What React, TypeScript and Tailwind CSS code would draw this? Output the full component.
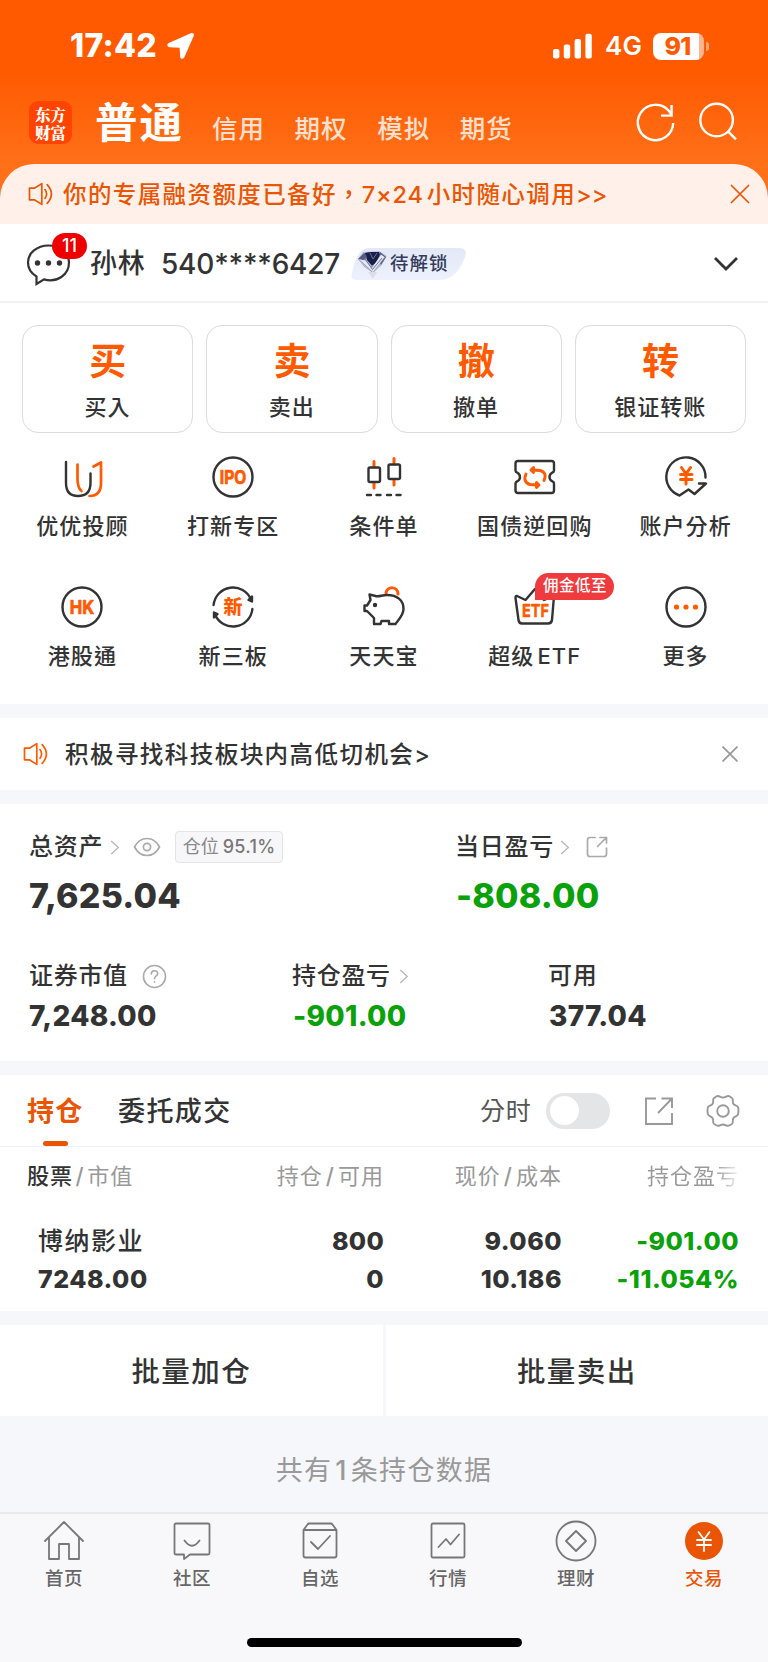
import type { ReactNode } from "react";

const INK = "#333333";
const ORANGE = "#ff5a00";

function StatusBar() {
  return (
    <div className="flex h-[92px] items-center text-white">
      <span className="ml-[70px] w-[97px] text-[32px] leading-none font-extrabold tracking-[0.300px]">17:42</span>
      <svg className="h-[28px] w-[28px]" viewBox="0 0 28 28" fill="#fff">
        <path d="M23.800 1.200C26 .3 27.600 1.800 26.700 4L17.400 25.300C16.400 27.400 13.600 27.200 13.200 24.900L12.600 15.800 2.800 15.200C-.1 14.800-.5 12.100 1.800 11Z" />
      </svg>
      <svg className="ml-[358px] h-[26px] w-[40px]" viewBox="0 0 40 26" fill="#fff">
        <rect x="0" y="16" width="6.4" height="9.6" rx="2" />
        <rect x="10.8" y="11.6" width="6.4" height="14" rx="2" />
        <rect x="21.6" y="6" width="6.4" height="19.6" rx="2" />
        <rect x="32.4" y="0.8" width="6.4" height="24.8" rx="2" />
      </svg>
      <span className="ml-[12px] w-[48px] text-[26px] leading-none font-semibold tracking-[0.300px]">4G</span>
      <div className="flex h-[27px] w-[51px] items-center justify-center rounded-[8px] bg-[linear-gradient(90deg,#fff_46px,#ffb490_46px)] pr-[2px] text-[25px] leading-none font-extrabold tracking-[-0.800px] text-[#ff5a00]">
        91
      </div>
      <div className="ml-[2px] h-[9px] w-[3px] rounded-r-full bg-[#ffa57a]" />
    </div>
  );
}

function Header() {
  return (
    <div className="flex h-[72px] text-white">
      <div className="mt-[9px] ml-[29px] flex h-[43px] w-[43px] items-center justify-center rounded-[9px] bg-[#ff4400] text-center font-['Noto_Serif_CJK_SC','Noto_Sans_CJK_SC',serif] text-[15.500px] leading-[18px] font-extrabold">
        东方
        <br />
        财富
      </div>
      <span className="mt-[6px] ml-[23px] w-[117px] font-['Noto_Sans_CJK_SC',sans-serif] text-[42.500px] leading-[44px] font-bold tracking-[2px] whitespace-nowrap" lang="zh-CN">
        普通
      </span>
      {["信用", "期权", "模拟", "期货"].map((t) => (
        <span key={t} className="mt-[19px] w-[82.600px] text-[25.500px] leading-[36px] tracking-[1px] text-[#ffe0cf]">
          {t}
        </span>
      ))}
      <svg className="mt-[8px] ml-[92px] h-[44px] w-[44px]" viewBox="0 0 44 44" fill="none" stroke="#fff" strokeWidth="2.400">
        <path d="M39.200 23A17.700 17.700 0 1 1 34.800 10.800L37.500 14.500M37.600 5V15.600H27" />
      </svg>
      <svg className="mt-[8px] ml-[18px] h-[44px] w-[44px]" viewBox="0 0 44 44" fill="none" stroke="#fff" strokeWidth="2.400">
        <circle cx="20.6" cy="20" r="16.3" />
        <path d="M32 31.4 40 39.4" />
      </svg>
    </div>
  );
}

function Speaker({ color, className }: { color: string; className: string }) {
  return (
    <svg className={className} viewBox="0 0 26 24" fill="none" stroke={color} strokeWidth="1.700" strokeLinejoin="round" strokeLinecap="round">
      <path d="M1.500 6.200H6.400L13.800 1.600V22.400L6.400 17.800H1.500ZM17 7.600Q20.200 12 17 16.400M19.200 2.600Q27.600 12 19.200 21.400" />
    </svg>
  );
}

function Chevron({ className }: { className: string }) {
  return (
    <svg className={className} viewBox="0 0 10 16" fill="none" stroke="#bbb" strokeWidth="1.600">
      <path d="M1 1 8.500 8 1 15" />
    </svg>
  );
}

function AccountRow() {
  return (
    <div className="flex h-[79px] items-center border-b-2 border-[#f1f1f3] pt-[2px] text-[#333]">
      <div className="relative ml-[26px] h-[44px] w-[46px]">
        <svg className="h-full w-full" viewBox="0 0 46 44" fill="none" stroke={INK} strokeWidth="2.200">
          <path d="M10.500 34.500V42L18 37.400C31 41 43 33 43 20.500 43 10 34 3.500 22.500 3.500 11 3.500 2 11 2 20.500 2 26 5.500 31.500 10.500 34.500Z" />
          <g fill={INK} stroke="none">
            <circle cx="11.500" cy="21" r="2.700" />
            <circle cx="22.500" cy="21" r="2.700" />
            <circle cx="33.500" cy="21" r="2.700" />
          </g>
        </svg>
        <span className="absolute top-[-9px] left-[26px] flex h-[26px] w-[35px] items-center justify-center rounded-full bg-[#ee0000] text-[18px] font-medium text-white">
          11
        </span>
      </div>
      <span className="ml-[18px] w-[71px] text-[27px] leading-none tracking-[0.800px]">孙林</span>
      <span className="w-[190px] text-[28px] leading-none font-medium tracking-[-0.200px]">540****6427</span>
      <div className="flex h-[32px] w-[116px] items-center">
        <svg className="h-[32px] w-[116px] shrink-0" viewBox="0 0 116 32">
          <defs>
            <linearGradient id="tag" x1="0" y1="0" x2="0" y2="1">
              <stop offset="0" stopColor="#e3e8f7" />
              <stop offset="1" stopColor="#eef1fd" />
            </linearGradient>
          </defs>
          <path d="M18 0H108Q117 0 114 9 106 32 88 32H6Q-1 32 1 25 6 0 18 0Z" fill="url(#tag)" />
          <path d="M7 11 12 4 28 3 36 8 30 18 22 25 13 19Z" fill="#b9bedb" />
          <path d="M14 5 20 4 28 4 31 10 22 19 16 12Z" fill="#17204a" />
          <path d="M7 11 13 5 17 8 12 13ZM29 4 35 9 30 17 27 12Z" fill="#555a7e" />
          <path d="M7 11 20 18 35 8 22 25Z" fill="#9197bd" />
          <path d="M14 5 28 4 26 12 22 17 17 11Z" fill="#17204a" />
          <path d="M8 11 14 12.500 21 20 30 6.500 33.500 9 22 24Z" fill="#e8e8ef" />
          <path d="M13 9.500 21.500 21.500 31 10M19 5 22 11 26 5" fill="none" stroke="#6f728c" strokeWidth="1" />
          <path d="M17 24H26L22 31Z" fill="#dcdde5" />
        </svg>
        <span className="ml-[-77px] text-[18.500px] leading-none font-medium tracking-[1px] whitespace-nowrap text-[#333c5c]">待解锁</span>
      </div>
      <svg className="ml-[246px] h-[16px] w-[26px]" viewBox="0 0 26 16" fill="none" stroke={INK} strokeWidth="2.800">
        <path d="M2 2 13 13 24 2" />
      </svg>
    </div>
  );
}

function QuickCards() {
  const cards = [
    ["买", "买入"],
    ["卖", "卖出"],
    ["撤", "撤单"],
    ["转", "银证转账"],
  ];
  return (
    <div className="grid grid-cols-4 gap-[13px] px-[22px] pt-[22px]">
      {cards.map(([big, label]) => (
        <div key={big} className="flex h-[108px] flex-col items-center rounded-[16px] border-[1.500px] border-[#dcdcdc]">
          <span className="mt-[16px] text-[37px] leading-[40px] font-bold text-[#ff5a00]">{big}</span>
          <span className="mt-[10.500px] text-[22px] leading-[28px] tracking-[1px] text-[#333]">{label}</span>
        </div>
      ))}
    </div>
  );
}

function Icon({ children }: { children: ReactNode }) {
  return (
    <svg className="h-[46px] w-[46px]" viewBox="0 0 46 46" fill="none" stroke={INK} strokeWidth="2.400" strokeLinecap="round" strokeLinejoin="round">
      {children}
    </svg>
  );
}

const icons = {
  uu: (
    <>
      <path d="M7 8V29Q7 42 19 42 31.500 42 31.500 29V19.500" />
      <path d="M18.500 10.500V24Q18.500 34 22.500 37M34.500 12.500 42 8.500V29Q42 42 30.500 42" stroke={ORANGE} strokeWidth="2.700" />
    </>
  ),
  ipo: (
    <>
      <circle cx="23" cy="23" r="19.500" />
      <text x="23" y="29.800" textAnchor="middle" fontSize="18.500" fontWeight="700" fill={ORANGE} stroke={ORANGE} strokeWidth=".7" textLength="26.500" lengthAdjust="spacingAndGlyphs">IPO</text>
    </>
  ),
  candle: (
    <>
      <path d="M13 7.500V13M13 28.500V34M33 4.500V10M33 25.500V31" stroke={ORANGE} strokeWidth="3" />
      <rect x="7.500" y="13.500" width="11.500" height="14.500" rx="1.500" />
      <rect x="27.500" y="10.500" width="11.500" height="14.500" rx="1.500" />
      <path d="M6 41H10M15.500 41H19.500M26 41H30M35.500 41H39.500" />
    </>
  ),
  bond: (
    <>
      <path d="M6 7H39.500Q42 7 42 9.500V16.500Q42 18 40.500 18.500 37.500 20 37.500 23T40.500 27.500Q42 28 42 29.500V36.500Q42 39 39.500 39H6Q3.500 39 3.500 36.500V29.500Q3.500 28 5 27.500 8 26 8 23T5 18.500Q3.500 18 3.500 16.500V9.500Q3.500 7 6 7Z" />
      <g stroke={ORANGE} strokeWidth="2.900">
        <path d="M14 20Q10.500 28 18 30.500L25 31M32 26.500Q35.500 18.500 28 16.500L21 16" />
        <path d="M24.500 28.500V33.500L27 31ZM21.500 13.500V18.500L19 16Z" />
      </g>
    </>
  ),
  analysis: (
    <>
      <path d="M42.500 23.500A19.600 19.600 0 1 0 16.500 41.500L25.500 35.500 31.500 40 43 29.500H36" />
      <path d="M18.500 13.500 23 20 27.500 13.500M17.500 20.500H29M17.500 25.500H29M23 20V30" stroke={ORANGE} strokeWidth="3" />
    </>
  ),
  hk: (
    <>
      <circle cx="23" cy="23" r="19.500" />
      <text x="23" y="29.800" textAnchor="middle" fontSize="18.500" fontWeight="700" fill={ORANGE} stroke={ORANGE} strokeWidth=".7" textLength="24.500" lengthAdjust="spacingAndGlyphs">HK</text>
    </>
  ),
  xin: (
    <>
      <path d="M3.600 21A19.500 19.500 0 0 1 41 15.500M42.400 25A19.500 19.500 0 0 1 5 30.500" />
      <path d="M42 12.500V17.500L38.500 16ZM4 33.500V28.500L7.500 30Z" fill={INK} />
      <text x="23" y="30" textAnchor="middle" fontSize="19" fontWeight="800" fill={ORANGE} stroke="none">新</text>
    </>
  ),
  pig: (
    <>
      <path d="M25 9C26 2 37 2 37 10" stroke={ORANGE} strokeWidth="3" />
      <path d="M14.500 12 8.500 10.500 9.500 16 6 21.500H3.500V27H6L13 34V40H19.500L20.500 37H28V40H34.500C38 35 42.500 31 42.500 25 42.500 16 36 11 26 11 21 11 18 13 14.500 12Z" />
      <circle cx="14" cy="21" r="2.200" fill={INK} stroke="none" />
    </>
  ),
  etf: (
    <>
      <path d="M5 12 13.500 16 23 5 32 16 42 12 40 36Q39.500 39.500 36 39.500H10Q7 39.500 6.500 36L3.500 14Q3.500 11.500 5 12Z" />
      <text x="23.500" y="33.200" textAnchor="middle" fontSize="18" fontWeight="700" fill={ORANGE} stroke={ORANGE} strokeWidth=".5" textLength="27" lengthAdjust="spacingAndGlyphs">ETF</text>
    </>
  ),
  more: (
    <>
      <circle cx="23" cy="23" r="19.500" />
      <g fill={ORANGE} stroke="none">
        <circle cx="13.500" cy="23" r="2.600" />
        <circle cx="23" cy="23" r="2.600" />
        <circle cx="32.500" cy="23" r="2.600" />
      </g>
    </>
  ),
};

const features: [keyof typeof icons, string][] = [
  ["uu", "优优投顾"],
  ["ipo", "打新专区"],
  ["candle", "条件单"],
  ["bond", "国债逆回购"],
  ["analysis", "账户分析"],
  ["hk", "港股通"],
  ["xin", "新三板"],
  ["pig", "天天宝"],
  ["etf", "超级 ETF"],
  ["more", "更多"],
];

function FeatureGrid() {
  return (
    <div className="grid h-[271px] grid-cols-5 content-start px-[7px] pt-[21px]">
      {features.map(([id, label]) => (
        <div key={id} className="relative flex h-[129.500px] flex-col items-center">
          <Icon>{icons[id]}</Icon>
          <span className="mt-[10px] text-[22px] leading-[32px] tracking-[1.100px] whitespace-nowrap text-[#333] [word-spacing:-4px]">{label}</span>
          {id === "etf" && (
            <span className="absolute top-[-11px] left-[76px] flex h-[27px] w-[79px] items-center justify-center rounded-[14px] rounded-bl-none bg-[#ef3b3e] text-[15.500px] font-medium tracking-[0.500px] whitespace-nowrap text-white">
              佣金低至
            </span>
          )}
        </div>
      ))}
    </div>
  );
}

function Assets() {
  return (
    <div className="h-[257px] pt-[27px] text-[#333]">
      <div className="flex h-[32px] items-center pl-[29px]">
        <span className="text-[24px] leading-none tracking-[0.700px] whitespace-nowrap">总资产</span>
        <Chevron className="ml-[7px] h-[15px] w-[10px]" />
        <svg className="ml-[13px] h-[22px] w-[28px]" viewBox="0 0 28 22" fill="none" stroke="#aaa" strokeWidth="1.700">
          <path d="M1.500 11Q6 2.500 14 2.500T26.500 11Q22 19.500 14 19.500T1.500 11Z" />
          <circle cx="14" cy="11" r="3.600" />
        </svg>
        <div className="ml-[14px] flex h-[32px] w-[108px] shrink-0 items-center justify-center rounded-[4px] border-[1.500px] border-[#e4e4e6] bg-[#f7f7f9] text-[18px] leading-none font-normal whitespace-nowrap text-[#888]">
          仓位<span className="ml-[4px] font-medium tracking-[0.300px] text-[#777]">95.1%</span>
        </div>
        <span className="ml-[172px] text-[24px] leading-none tracking-[0.700px] whitespace-nowrap">当日盈亏</span>
        <Chevron className="ml-[6px] h-[15px] w-[10px]" />
        <svg className="ml-[16px] h-[22px] w-[22px]" viewBox="0 0 22 22" fill="none" stroke="#aaa" strokeWidth="1.700" strokeLinecap="round">
          <path d="M9 1.500H4Q1.500 1.500 1.500 4V18Q1.500 20.500 4 20.500H18Q20.500 20.500 20.500 18V12M14 1.500H20.500V7M20 2 11.500 10.500" />
        </svg>
      </div>
      <div className="mt-[15px] flex h-[36px] items-center pl-[29px] text-[34px] leading-none font-extrabold tracking-[0.200px]">
        <span className="w-[427px]">7,625.04</span>
        <span className="text-[#0aa10a]">-808.00</span>
      </div>
      <div className="mt-[46px] flex h-[32px] items-center pl-[29px] text-[24px] leading-none tracking-[0.700px]">
        <div className="flex w-[263px] items-center">
          <span>证券市值</span>
          <svg className="ml-[14px] h-[25px] w-[25px]" viewBox="0 0 25 25" fill="none" stroke="#aaa" strokeWidth="1.600" strokeLinecap="round">
            <circle cx="12.500" cy="12.500" r="11" />
            <path d="M9.300 10Q9.300 6.700 12.500 6.700T15.700 9.700C15.700 12 12.500 12 12.500 14.800M12.500 17.900V18.100" />
          </svg>
        </div>
        <div className="flex w-[256px] items-center">
          <span>持仓盈亏</span>
          <Chevron className="ml-[8px] h-[15px] w-[10px]" />
        </div>
        <span>可用</span>
      </div>
      <div className="mt-[7px] flex h-[34px] items-center pl-[29px] text-[28px] leading-none font-extrabold tracking-[0.300px]">
        <span className="w-[264px]">7,248.00</span>
        <span className="w-[256px] text-[#0aa10a]">-901.00</span>
        <span>377.04</span>
      </div>
    </div>
  );
}

function Holdings() {
  return (
    <div className="h-[236px] text-[#333]">
      <div className="flex h-[72px] items-center border-b-[1.500px] border-[#f0f0f2]">
        <div className="flex h-full w-[91px] shrink-0 flex-col pl-[27px]">
          <span className="pt-[19px] text-[27px] leading-[36px] font-bold tracking-[1.300px] text-[#ea5504]">持仓</span>
          <span className="mt-auto ml-[16px] h-[5px] w-[25px] rounded-full bg-[#ea5504]" />
        </div>
        <span className="ml-[27px] w-[362px] pt-[2px] text-[27px] leading-none tracking-[1.400px]">委托成交</span>
        <span className="w-[66px] pt-[2px] text-[25px] leading-none font-normal tracking-[0.800px] text-[#555]">分时</span>
        <div className="flex h-[36px] w-[64px] items-center rounded-full bg-[#e4e5e7] px-[3.500px]">
          <div className="h-[29px] w-[29px] rounded-full bg-white" />
        </div>
        <svg className="ml-[34px] h-[30px] w-[30px]" viewBox="0 0 30 30" fill="none" stroke="#999" strokeWidth="1.900">
          <path d="M12 2.500H2V28H28V17M17.500 2.500H28V12M27.500 3 14 17" />
        </svg>
        <svg className="ml-[31px] h-[36px] w-[36px]" viewBox="0 0 36 36" fill="none" stroke="#999" strokeWidth="1.900" strokeLinejoin="round">
          <path d="M18 4.500C21 4.500 22 2 24.200 3.200L27 5C28.800 6.200 27 8.500 28.300 10.700 29.600 13 32.500 12.500 33.200 14.500L33.500 17.500 33.200 21C32.500 23.500 29.600 23 28.300 25.300 27 27.500 28.800 29.800 27 31L24.200 32.500C22 33.700 21 31.500 18 31.500S14 33.700 11.800 32.500L9 31C7.200 29.800 9 27.500 7.700 25.300 6.400 23 3.500 23.500 2.800 21L2.500 17.500 2.800 14.500C3.500 12.500 6.400 13 7.700 10.700 9 8.500 7.200 6.200 9 5L11.800 3.200C14 2 15 4.500 18 4.500Z" />
          <circle cx="18" cy="18" r="5.800" />
        </svg>
      </div>
      <div className="flex h-[57px] items-center pl-[27px] text-[22px] leading-none font-normal tracking-[1px] whitespace-nowrap text-[#999]">
        <span className="w-[200px]">
          <span className="font-medium text-[#333]">股票</span>
          <span className="mx-[2.500px] font-medium">/</span>市值
        </span>
        <span className="w-[157px] text-right">
          持仓<span className="mx-[3px] font-medium">/</span>可用
        </span>
        <span className="w-[178px] text-right">
          现价<span className="mx-[3px] font-medium">/</span>成本
        </span>
        <span className="ml-auto mr-[29px] bg-[linear-gradient(90deg,#999_74%,#9992_100%)] bg-clip-text py-1 text-transparent">持仓盈亏</span>
      </div>
      <div className="mt-[18px] grid grid-cols-[346px_178px_177px] pl-[38px] text-right text-[25px] leading-[38px] font-extrabold tracking-[0.500px]">
        <span className="text-left font-medium tracking-[1.500px]">
          博纳影业<span className="float-right font-extrabold tracking-[0.300px]">800</span>
        </span>
        <span>9.060</span>
        <span className="text-[#0aa10a]">-901.00</span>
        <span className="text-left">
          7248.00<span className="float-right">0</span>
        </span>
        <span>10.186</span>
        <span className="text-[#0aa10a]">-11.054%</span>
      </div>
    </div>
  );
}

function BatchActions() {
  return (
    <div className="flex h-[91px] gap-[3px] text-[28.500px] leading-none tracking-[1.400px] text-[#333]">
      <div className="flex flex-1 items-center justify-center bg-white pt-[4px]">批量加仓</div>
      <div className="flex flex-1 items-center justify-center bg-white pt-[4px]">批量卖出</div>
    </div>
  );
}

const tabs: [string, ReactNode][] = [
  ["首页", <path key="a" d="M2 21 21 2 40 21M6 17.500V39H16V24H26V39H36V17.500" />],
  ["社区", <path key="b" d="M5 3.500H37Q38.500 3.500 38.500 5V33Q38.500 34.500 37 34.500H19L13 39V34.500H5Q3.500 34.500 3.500 33V5Q3.500 3.500 5 3.500ZM13.500 20.500Q21 31 28.500 20.500" />],
  ["自选", <path key="c" d="M4.500 10V35.500Q4.500 37.500 6.500 37.500H35.500Q37.500 37.500 37.500 35.500V10ZM4.500 10 8.500 4.500Q9 3.500 10.500 3.500H31.500Q33 3.500 33.500 4.500L37.500 10M12 22 19 29 31 16" />],
  ["行情", <path key="d" d="M6 3.500H36Q37.500 3.500 37.500 5V36Q37.500 37.500 36 37.500H6Q4.500 37.500 4.500 36V5Q4.500 3.500 6 3.500ZM11.500 27 19 19 23.500 24.500 32 14.500" />],
  ["理财", <path key="e" d="M21 1.500A19.500 19.500 0 1 1 21 40.500 19.500 19.500 0 1 1 21 1.500ZM21 11 31 21 21 31 11 21Z" />],
  ["交易", <g key="f"><circle cx="21" cy="21" r="19" fill="#ea5504" stroke="none" /><path d="M15.500 12 21 19.500 26.500 12M14 20H28M14 25H28M21 20V31" stroke="#fff" /></g>],
];

function TabBar() {
  return (
    <div className="h-[150px] border-t-2 border-[#eaeaec] bg-[#f8f8fb]">
      <div className="flex h-[124px]">
        {tabs.map(([label, icon], i) => (
          <div key={label} className={i === 5 ? "flex flex-1 flex-col items-center pt-[6px] text-[#ea5504]" : "flex flex-1 flex-col items-center pt-[6px] text-[#666]"}>
            <svg className="h-[42px] w-[42px]" viewBox="0 0 42 42" fill="none" stroke="#777" strokeWidth="1.800" strokeLinejoin="round" strokeLinecap="round">
              {icon}
            </svg>
            <span className="mt-[3px] text-[18.500px] leading-[26px] font-medium tracking-[0.500px]">{label}</span>
          </div>
        ))}
      </div>
      <div className="mx-auto h-[9px] w-[275px] rounded-full bg-black" />
    </div>
  );
}

export default function App() {
  return (
    <div lang="zh-TW" className="flex h-[1662px] w-[768px] flex-col overflow-hidden bg-[#f6f7fa] font-['Inter','Noto_Sans_CJK_TC',sans-serif] font-medium">
      <div className="h-[200px] shrink-0 bg-[linear-gradient(180deg,#ff5a00_0,#ff5a00_70px,#ff7019_164px)]">
        <StatusBar />
        <Header />
      </div>
      <div className="mt-[-36px] flex h-[60px] shrink-0 items-center rounded-t-[34px] bg-[#fff1e9] text-[#ea5504]">
        <Speaker color="#ea5504" className="ml-[28px] h-[24px] w-[26px]" />
        <span className="ml-[9px] w-[667px] pt-[1px] text-[23.500px] leading-none tracking-[1.400px] whitespace-nowrap">
          你的专属融资额度已备好，<span className="mr-[3px] tracking-[0.800px]">7×24</span>小时随心调用<span className="tracking-[0px]">&gt;&gt;</span>
        </span>
        <svg className="h-[20px] w-[20px]" viewBox="0 0 20 20" fill="none" stroke="#ea5504" strokeWidth="1.700">
          <path d="M1 1 19 19M19 1 1 19" />
        </svg>
      </div>
      <div className="h-[480px] shrink-0 bg-white">
        <AccountRow />
        <QuickCards />
        <FeatureGrid />
      </div>
      <div className="mt-[14px] flex h-[72px] shrink-0 items-center bg-white text-[#333]">
        <Speaker color={ORANGE} className="ml-[23px] h-[24px] w-[26px]" />
        <span className="ml-[16px] w-[657px] pt-[1px] text-[23.500px] leading-none tracking-[1.450px] whitespace-nowrap">积极寻找科技板块内高低切机会&gt;</span>
        <svg className="h-[16px] w-[16px]" viewBox="0 0 16 16" fill="none" stroke="#999" strokeWidth="1.700">
          <path d="M.5.5 15.500 15.500M15.500.5.5 15.500" />
        </svg>
      </div>
      <div className="mt-[14px] shrink-0 bg-white">
        <Assets />
      </div>
      <div className="mt-[14px] shrink-0 bg-white">
        <Holdings />
      </div>
      <div className="mt-[14px] shrink-0">
        <BatchActions />
      </div>
      <div className="flex h-[96px] shrink-0 items-center justify-center pt-[13px] text-[27px] leading-none font-normal tracking-[1.300px] text-[#999]">
        共有<span className="mx-[3px] font-medium">1</span>条持仓数据
      </div>
      <TabBar />
    </div>
  );
}
